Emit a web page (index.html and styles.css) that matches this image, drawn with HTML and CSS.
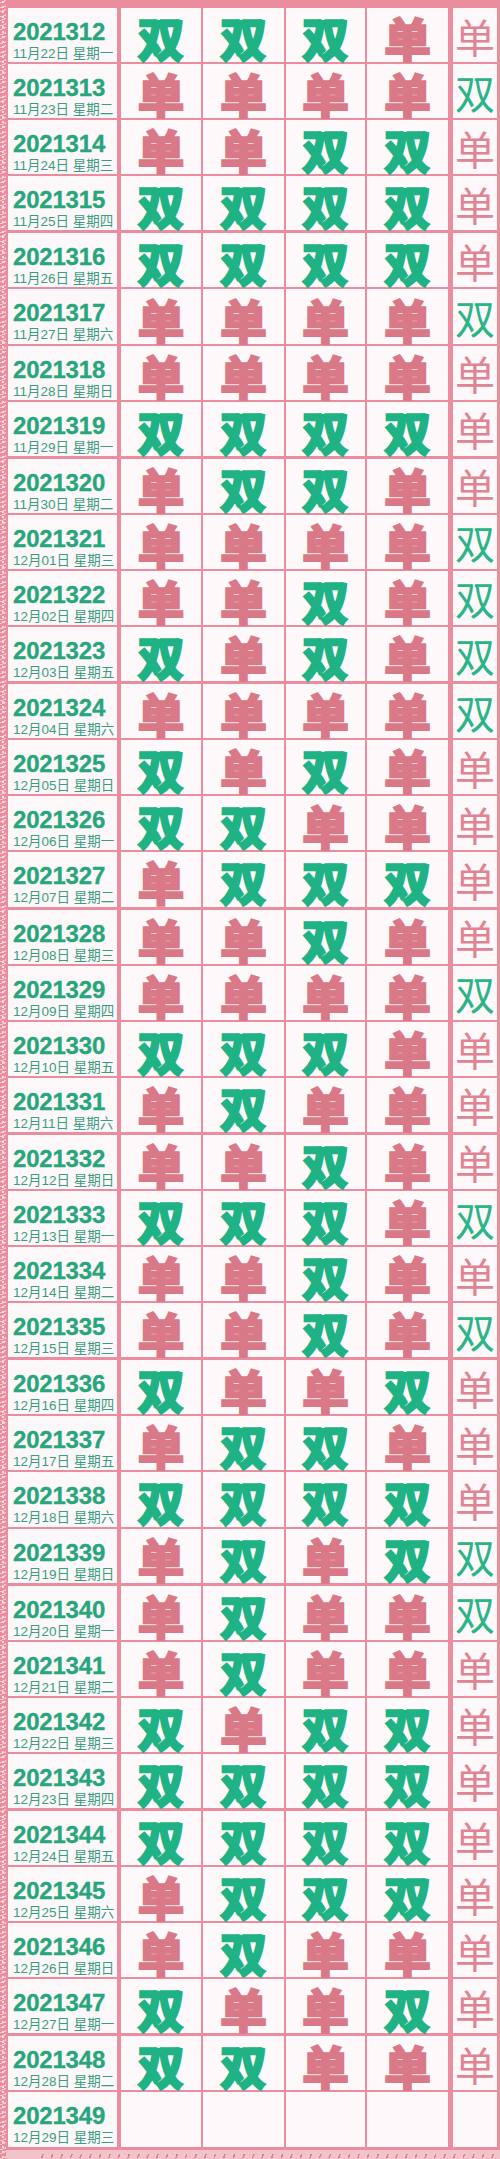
FILE: index.html
```html
<!DOCTYPE html>
<html lang="zh-CN">
<head>
<meta charset="utf-8">
<title>2021 单双</title>
<link rel="stylesheet" href="styles.css">
</head>
<body>
<div class="sheet">
  <div class="lace"></div>
  <div class="main">
    <div class="table">
      <div class="row"><div class="lbl"><div class="num">2021312</div><div class="date">11月22日 星期一</div></div><div class="c s">双</div><div class="c s">双</div><div class="c s">双</div><div class="c d">单</div><div class="t d">单</div></div>
      <div class="row"><div class="lbl"><div class="num">2021313</div><div class="date">11月23日 星期二</div></div><div class="c d">单</div><div class="c d">单</div><div class="c d">单</div><div class="c d">单</div><div class="t s">双</div></div>
      <div class="row"><div class="lbl"><div class="num">2021314</div><div class="date">11月24日 星期三</div></div><div class="c d">单</div><div class="c d">单</div><div class="c s">双</div><div class="c s">双</div><div class="t d">单</div></div>
      <div class="row"><div class="lbl"><div class="num">2021315</div><div class="date">11月25日 星期四</div></div><div class="c s">双</div><div class="c s">双</div><div class="c s">双</div><div class="c s">双</div><div class="t d">单</div></div>
      <div class="row gs"><div class="lbl"><div class="num">2021316</div><div class="date">11月26日 星期五</div></div><div class="c s">双</div><div class="c s">双</div><div class="c s">双</div><div class="c s">双</div><div class="t d">单</div></div>
      <div class="row"><div class="lbl"><div class="num">2021317</div><div class="date">11月27日 星期六</div></div><div class="c d">单</div><div class="c d">单</div><div class="c d">单</div><div class="c d">单</div><div class="t s">双</div></div>
      <div class="row"><div class="lbl"><div class="num">2021318</div><div class="date">11月28日 星期日</div></div><div class="c d">单</div><div class="c d">单</div><div class="c d">单</div><div class="c d">单</div><div class="t d">单</div></div>
      <div class="row"><div class="lbl"><div class="num">2021319</div><div class="date">11月29日 星期一</div></div><div class="c s">双</div><div class="c s">双</div><div class="c s">双</div><div class="c s">双</div><div class="t d">单</div></div>
      <div class="row gs"><div class="lbl"><div class="num">2021320</div><div class="date">11月30日 星期二</div></div><div class="c d">单</div><div class="c s">双</div><div class="c s">双</div><div class="c d">单</div><div class="t d">单</div></div>
      <div class="row"><div class="lbl"><div class="num">2021321</div><div class="date">12月01日 星期三</div></div><div class="c d">单</div><div class="c d">单</div><div class="c d">单</div><div class="c d">单</div><div class="t s">双</div></div>
      <div class="row"><div class="lbl"><div class="num">2021322</div><div class="date">12月02日 星期四</div></div><div class="c d">单</div><div class="c d">单</div><div class="c s">双</div><div class="c d">单</div><div class="t s">双</div></div>
      <div class="row"><div class="lbl"><div class="num">2021323</div><div class="date">12月03日 星期五</div></div><div class="c s">双</div><div class="c d">单</div><div class="c s">双</div><div class="c d">单</div><div class="t s">双</div></div>
      <div class="row gs"><div class="lbl"><div class="num">2021324</div><div class="date">12月04日 星期六</div></div><div class="c d">单</div><div class="c d">单</div><div class="c d">单</div><div class="c d">单</div><div class="t s">双</div></div>
      <div class="row"><div class="lbl"><div class="num">2021325</div><div class="date">12月05日 星期日</div></div><div class="c s">双</div><div class="c d">单</div><div class="c s">双</div><div class="c d">单</div><div class="t d">单</div></div>
      <div class="row"><div class="lbl"><div class="num">2021326</div><div class="date">12月06日 星期一</div></div><div class="c s">双</div><div class="c s">双</div><div class="c d">单</div><div class="c d">单</div><div class="t d">单</div></div>
      <div class="row"><div class="lbl"><div class="num">2021327</div><div class="date">12月07日 星期二</div></div><div class="c d">单</div><div class="c s">双</div><div class="c s">双</div><div class="c s">双</div><div class="t d">单</div></div>
      <div class="row gs"><div class="lbl"><div class="num">2021328</div><div class="date">12月08日 星期三</div></div><div class="c d">单</div><div class="c d">单</div><div class="c s">双</div><div class="c d">单</div><div class="t d">单</div></div>
      <div class="row"><div class="lbl"><div class="num">2021329</div><div class="date">12月09日 星期四</div></div><div class="c d">单</div><div class="c d">单</div><div class="c d">单</div><div class="c d">单</div><div class="t s">双</div></div>
      <div class="row"><div class="lbl"><div class="num">2021330</div><div class="date">12月10日 星期五</div></div><div class="c s">双</div><div class="c s">双</div><div class="c s">双</div><div class="c d">单</div><div class="t d">单</div></div>
      <div class="row"><div class="lbl"><div class="num">2021331</div><div class="date">12月11日 星期六</div></div><div class="c d">单</div><div class="c s">双</div><div class="c d">单</div><div class="c d">单</div><div class="t d">单</div></div>
      <div class="row gs"><div class="lbl"><div class="num">2021332</div><div class="date">12月12日 星期日</div></div><div class="c d">单</div><div class="c d">单</div><div class="c s">双</div><div class="c d">单</div><div class="t d">单</div></div>
      <div class="row"><div class="lbl"><div class="num">2021333</div><div class="date">12月13日 星期一</div></div><div class="c s">双</div><div class="c s">双</div><div class="c s">双</div><div class="c d">单</div><div class="t s">双</div></div>
      <div class="row"><div class="lbl"><div class="num">2021334</div><div class="date">12月14日 星期二</div></div><div class="c d">单</div><div class="c d">单</div><div class="c s">双</div><div class="c d">单</div><div class="t d">单</div></div>
      <div class="row"><div class="lbl"><div class="num">2021335</div><div class="date">12月15日 星期三</div></div><div class="c d">单</div><div class="c d">单</div><div class="c s">双</div><div class="c d">单</div><div class="t s">双</div></div>
      <div class="row gs"><div class="lbl"><div class="num">2021336</div><div class="date">12月16日 星期四</div></div><div class="c s">双</div><div class="c d">单</div><div class="c d">单</div><div class="c s">双</div><div class="t d">单</div></div>
      <div class="row"><div class="lbl"><div class="num">2021337</div><div class="date">12月17日 星期五</div></div><div class="c d">单</div><div class="c s">双</div><div class="c s">双</div><div class="c d">单</div><div class="t d">单</div></div>
      <div class="row"><div class="lbl"><div class="num">2021338</div><div class="date">12月18日 星期六</div></div><div class="c s">双</div><div class="c s">双</div><div class="c s">双</div><div class="c s">双</div><div class="t d">单</div></div>
      <div class="row"><div class="lbl"><div class="num">2021339</div><div class="date">12月19日 星期日</div></div><div class="c d">单</div><div class="c s">双</div><div class="c d">单</div><div class="c s">双</div><div class="t s">双</div></div>
      <div class="row gs"><div class="lbl"><div class="num">2021340</div><div class="date">12月20日 星期一</div></div><div class="c d">单</div><div class="c s">双</div><div class="c d">单</div><div class="c d">单</div><div class="t s">双</div></div>
      <div class="row"><div class="lbl"><div class="num">2021341</div><div class="date">12月21日 星期二</div></div><div class="c d">单</div><div class="c s">双</div><div class="c d">单</div><div class="c d">单</div><div class="t d">单</div></div>
      <div class="row"><div class="lbl"><div class="num">2021342</div><div class="date">12月22日 星期三</div></div><div class="c s">双</div><div class="c d">单</div><div class="c s">双</div><div class="c s">双</div><div class="t d">单</div></div>
      <div class="row"><div class="lbl"><div class="num">2021343</div><div class="date">12月23日 星期四</div></div><div class="c s">双</div><div class="c s">双</div><div class="c s">双</div><div class="c s">双</div><div class="t d">单</div></div>
      <div class="row gs"><div class="lbl"><div class="num">2021344</div><div class="date">12月24日 星期五</div></div><div class="c s">双</div><div class="c s">双</div><div class="c s">双</div><div class="c s">双</div><div class="t d">单</div></div>
      <div class="row"><div class="lbl"><div class="num">2021345</div><div class="date">12月25日 星期六</div></div><div class="c d">单</div><div class="c s">双</div><div class="c s">双</div><div class="c s">双</div><div class="t d">单</div></div>
      <div class="row"><div class="lbl"><div class="num">2021346</div><div class="date">12月26日 星期日</div></div><div class="c d">单</div><div class="c s">双</div><div class="c d">单</div><div class="c d">单</div><div class="t d">单</div></div>
      <div class="row"><div class="lbl"><div class="num">2021347</div><div class="date">12月27日 星期一</div></div><div class="c s">双</div><div class="c d">单</div><div class="c d">单</div><div class="c s">双</div><div class="t d">单</div></div>
      <div class="row gs"><div class="lbl"><div class="num">2021348</div><div class="date">12月28日 星期二</div></div><div class="c s">双</div><div class="c s">双</div><div class="c d">单</div><div class="c d">单</div><div class="t d">单</div></div>
      <div class="row"><div class="lbl"><div class="num">2021349</div><div class="date">12月29日 星期三</div></div><div class="c"></div><div class="c"></div><div class="c"></div><div class="c"></div><div class="t"></div></div>
    </div>
    <div class="footer"></div>
  </div>
</div>
</body>
</html>
```

FILE: styles.css
```css
html, body {
  margin: 0;
  padding: 0;
}
body {
  width: 500px;
  background: #f3c3cc;
  font-family: "Liberation Sans", "Noto Sans CJK SC", sans-serif;
}
.sheet {
  display: flex;
  align-items: stretch;
}
.lace {
  width: 6px;
  flex: none;
  background-color: #e98c9e;
  background-image:
    radial-gradient(circle at 3px 2px, #f9dbe1 0 1px, transparent 1.6px),
    repeating-linear-gradient(160deg, transparent 0 2px, rgba(255, 230, 236, 0.7) 2px 3px, transparent 3px 5px);
  background-size: 6px 5px, 6px 9px;
}
.main {
  flex: 1;
  display: flex;
  flex-direction: column;
}
.table {
  background: #ea8d9f;
  padding: 8px 3px 3px 2px;
}
.row {
  display: flex;
  height: 54.1px;
  margin-top: 2px;
}
.row:first-child {
  margin-top: 0;
}
.row.gs {
  margin-top: 3px;
}
.lbl {
  width: 109px;
  flex: none;
  box-sizing: border-box;
  padding: 10px 0 0 5px;
  background: #fcf7f9;
}
.num {
  font-size: 24px;
  font-weight: 700;
  line-height: 28px;
  color: #27a57b;
  letter-spacing: -0.2px;
  -webkit-text-stroke: 0.3px #27a57b;
}
.date {
  font-size: 13.5px;
  line-height: 15px;
  color: #3b9c80;
  white-space: nowrap;
}
.c, .t {
  flex: none;
  display: flex;
  align-items: center;
  justify-content: center;
  background: #fdf8fa;
  font-family: "Noto Sans CJK SC", sans-serif;
  line-height: 1;
  margin-left: 2px;
}
.c {
  font-size: 47px;
  font-weight: 900;
  padding-top: 3px;
  box-sizing: border-box;
  -webkit-text-stroke: 1.6px currentColor;
}
.row > .c:nth-child(2) { width: 80px; margin-left: 4px; }
.row > .c:nth-child(3) { width: 81px; }
.row > .c:nth-child(4) { width: 79px; }
.row > .c:nth-child(5) { width: 81px; }
.t {
  width: 44px;
  margin-left: 5px;
  font-size: 40px;
  font-weight: 400;
  padding-top: 1px;
  box-sizing: border-box;
}
.c.s { color: #1fb284; }
.c.d { color: #d97886; }
.t.s { color: #2bb487; }
.t.d { color: #e08494; }
.footer {
  height: 9px;
  background-color: #f3c3cc;
  background-image: repeating-linear-gradient(110deg, transparent 0 6px, #e07d90 6px 7.5px, transparent 7.5px 9px);
  background-size: 100% 4px;
  background-position: 30px 4px;
  background-repeat: no-repeat;
}
```
